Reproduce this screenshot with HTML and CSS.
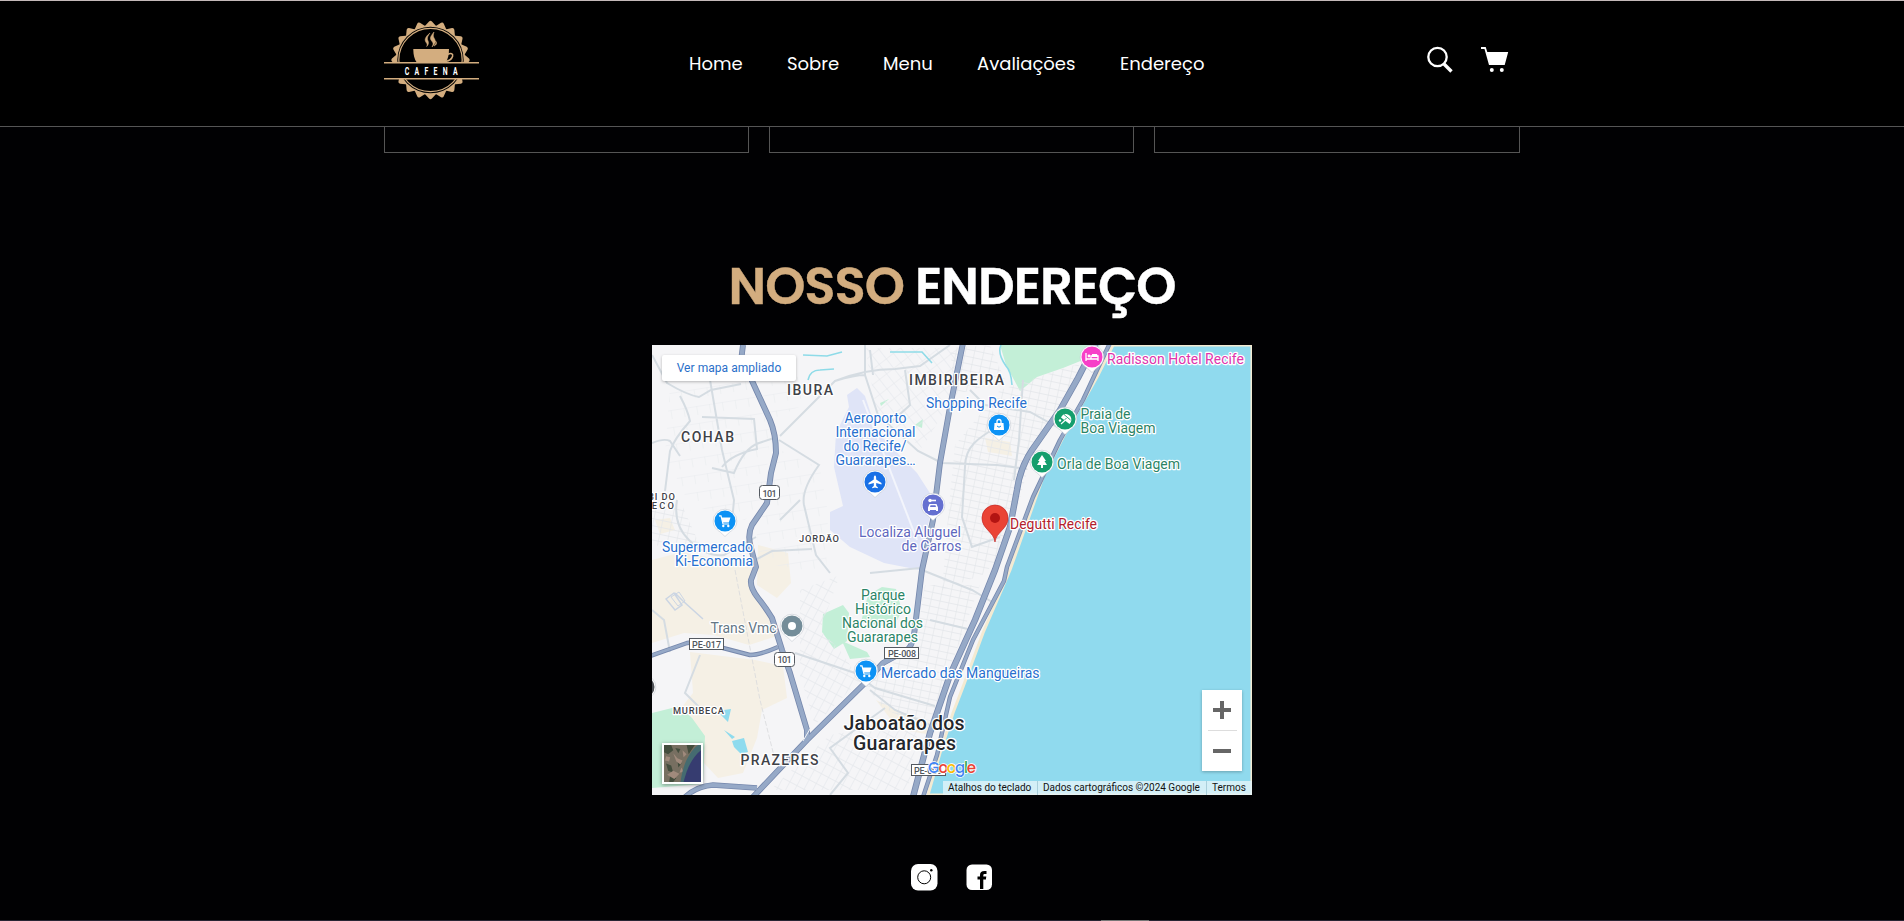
FILE: index.html
```html
<!DOCTYPE html>
<html lang="pt-BR">
<head>
<meta charset="utf-8">
<title>Cafena</title>
<link rel="stylesheet" href="styles.css">
</head>
<body>
<header class="header">
  <div class="container header-inner">
    <svg class="logo" viewBox="384 18 96 84" id="logo">
      <path id="scallop" fill="#d3ad7f"/>
      <circle cx="430.5" cy="60" r="33.2" fill="#000"/>
      <circle cx="430.5" cy="60" r="31.700" fill="none" stroke="#d3ad7f" stroke-width="1.2"/>
      <path d="M413.300 49h35.700c0 6-1 10-3.500 14h-28.500c-2.700-4-3.700-8-3.700-14z" fill="#d3ad7f"/>
      <path d="M448 54.200c3-1.200 5.300-.5 4.600 2-.7 2.500-3.500 4.500-7 5.300" fill="none" stroke="#d3ad7f" stroke-width="1.500"/>
      <path d="M430 33c-5 4-6 7-3.500 10 .8 1 .8 2 .2 3.500 3-3 1.500-5 .8-7-.5-2 .7-4 2.500-6.500zM434 32c-5 6-4 7-1.500 10 1 1.500.5 3-.5 5 4-4 4-6 2-9-1-2-.8-3.500 0-6zM435.500 41c1 2-.5 3.500-1.500 5 2.500-1 3.500-3 1.500-5z" fill="#d3ad7f" stroke="#d3ad7f" stroke-width=".5"/>
      <rect x="384" y="62" width="95" height="17" fill="#000"/>
      <path d="M384 62.800h95M384 78.800h95" stroke="#d3ad7f" stroke-width="1.600"/>
      <text transform="translate(404.800 75) scale(.6 1)" textLength="88" class="logo-text">CAFENA</text>
    </svg>
    <nav class="nav">
      <a class="home">Home</a><a class="sobre">Sobre</a><a class="menu">Menu</a><a class="aval">Avaliações</a><a class="ender">Endereço</a>
    </nav>
    <div class="tools">
      <svg width="28" height="28" viewBox="0 0 28 28"><circle cx="10.500" cy="11" r="9.200" fill="none" stroke="#fff" stroke-width="2.300"/><path d="M16.500 17.500l8 8" stroke="#fff" stroke-width="3.400"/></svg>
      <svg width="28" height="28" viewBox="0 0 28 28"><path d="M0 .9h4.700l1.600 5h20.900l-3.500 13H8L3.500 3H0z" fill="#fff"/><circle cx="10.800" cy="23.900" r="2" fill="#fff"/><circle cx="20.800" cy="23.900" r="2" fill="#fff"/></svg>
    </div>
  </div>
</header>
<main>
  <section class="container cards"><div class="card"></div><div class="card"></div><div class="card"></div></section>
  <h2 class="title"><span>Nosso</span> Endereço</h2>
  <div class="map">
    <svg class="map-canvas" width="600" height="450" viewBox="652 345 600 450">
      <defs>
        <pattern id="g1" width="9" height="7" patternUnits="userSpaceOnUse" patternTransform="rotate(12)"><path d="M0 0H9M0 0V7" stroke="#e3e6ea" stroke-width="1.300"/></pattern>
        <pattern id="g2" width="8" height="11" patternUnits="userSpaceOnUse" patternTransform="rotate(28)"><path d="M0 0H8M0 0V11" stroke="#e5e8ec" stroke-width="1.300"/></pattern>
        <pattern id="g3" width="13" height="17" patternUnits="userSpaceOnUse" patternTransform="rotate(-9)"><path d="M0 0H13M0 0V9" stroke="#eaecef" stroke-width="1.200"/></pattern>
        <pattern id="g4" width="9" height="12" patternUnits="userSpaceOnUse" patternTransform="rotate(-38)"><path d="M0 0H9M0 0V12" stroke="#e5e8ec" stroke-width="1.200"/></pattern>
        <g id="pin"><path d="M-11.800 0a11.800 11.800 0 1 1 23.600 0c0 5-3 8.500-7 11L0 15.500-4.800 11c-4-2.500-7-6-7-11z" fill="#fff" stroke="#b9bec8" stroke-width=".5"/></g>
        <g id="cart"><path d="M-3.600-3.500H5.500L3.800 1.500H-2.300z" fill="#fff"/><path d="M-6-5.200h2l2 8.200H4" fill="none" stroke="#fff" stroke-width="1.200"/><circle cx="-1.700" cy="5" r="1.200" fill="#fff"/><circle cx="3.300" cy="5" r="1.200" fill="#fff"/></g>
      </defs>
      <path d="M652 345h600v450H652z" fill="#f5f5f7"/>
      <g fill="#f5f0e5">
        <path d="M652 560l30-8 40 8 30 8-1 22 20 22 6 24-28 9-35-10-30-2-32 10zM758 545l30 8 3 30-14 15-20-13zM690 652l65 8 28 6 4 32-25 12-5 28-14 35-25 5-30-32-25-15 30-38zM985 438l25 4 2 14-24-4zM655 520l15-2 5 12-15 4zM876 700l25 12 30 10-5 12-28-5z"/>
      </g>
      <path d="M652 713l28-7 12 12 13 18-2 48-51 4zM1000 345l6 20 14 26 17-14 26-9 20-8 18-15zM823 614l20-9 6 8-2 28-13 8-12-17zM868 595l14-8 14 2 6 22-9 17-32-6zM842 641l25 11 3 5-20 2zM880 403l9-4-8 7zM915 425l8-6-1 9z" fill="#c3efd7"/>
      <path d="M857 388l8 8 12 36 40 41 18 28-9 30-6 39-36-7-34-16-20-17v-18l13-6-9-39 2-34 13-26-2-12z" fill="#dfe4f7"/>
      <g>
        <path d="M1000 390l44-15 36-12-18 50-30 42-28 100-22 20-40 15 7-85 6-60z" fill="url(#g1)"/>
        <path d="M925 585h55l-27 75-25 70-45-22-18-23 50-40z" fill="url(#g1)"/>
        <path d="M670 385l75-10 25 55-5 70-20 20-55-15-25-50z" fill="url(#g3)"/>
        <path d="M865 348h95l-10 55-28 45-45-35z" fill="url(#g4)"/>
        <path d="M780 450l40 18 8 45-2 60-65-10-5-35zM760 385l45-10 10 25-45 20z" fill="url(#g3)"/>
        <path d="M800 590l40-15-20 55 20 20 20 30-45 45-15-50zM830 735l90-15-12 70H770z" fill="url(#g2)"/>
        <path d="M652 500l30 5 20 45-50-5zM950 348l40-3 15 35-50 15z" fill="url(#g1)"/>
      </g>
      <g fill="none" stroke="#d5dce2" stroke-width="2">
        <path d="M652 355l15 28q20 12 32 14l12-7 30-6M710 380l12 70 12 50-2 22M680 396q8 15 10 25-16 18-20 30l-5 40M702 417l52 2 3 30q-25 5-35 18M712 468l22 5q10-25 25-30l18-6M779 440l40 25q-18 25-15 40l12 50 14 18M780 436l55-55q20-6 30-6v-30M865 375l13 40 40 36 24 12M835 381q30-12 60-12l25-3 30-21M652 443q12-5 18-2l10 15M677 500q-4 25 12 40 16 17 35 15l32-18M757 559l15-8 40-2M870 573l50-5M942 463l55 2 30 4M970 390l15 15 45 7 45 25M1023 380l-4 60-5 40M1000 425c-20 12-35 20-35 42l-3 50 10 30 28-10"/>
        <path d="M795 653l60 20 20 15 60 18M870 690l25 20 35 15M922 570l50 20 25 15M930 620l42 10M652 610l12 10 6 32M700 655l-15 38 15 15M830 795l18-22-18-25 55-40M905 370l5 35-22 20M800 500l-20 20M870 350l3 25"/>
      </g>
      <path d="M675 593l8 8 20 18M666 599l8-6 8 12-7 5z" fill="none" stroke="#cbd5e3" stroke-width="1.500"/>
      <path d="M671 597l8-5 6 9-7 5z" fill="none" stroke="#cbd5e3"/>
      <path d="M863 400l54 140" stroke="#f3f5fc" stroke-width="2"/>
      <path d="M735 570l25 130 15 60" stroke="#d8d9dc" fill="none" stroke-width=".8" stroke-dasharray="5 2"/>
      <path d="M803 355l24 1 15-4M808 380q2-10 12-10l14-1M890 352h32l10 11M1001 345q-4 8 5 21 5 5 6 19" fill="none" stroke="#8edbe8" stroke-width="1.600"/>
      <path d="M717 711l14-2-3 13zM724 730l11 7-3 2zM732 741l12-3 4 14-7 2-7-7z" fill="#8edbee"/>
      <path d="M1113 345l-16 32-34 60-20 40-33 93-27 63-20 54-10 26-13 40-12 42h324V345z" fill="#90daee" stroke="#f3ead2" stroke-width="3"/>
      <g id="roads" fill="none" stroke-linejoin="round"></g>
      <path d="M803 741l7-12 7-5" fill="none" stroke="#f5f5f7" stroke-width="1"/>
      <g class="shield">
        <rect x="759.500" y="485.500" width="20" height="14" rx="3"/><text x="762.500" y="496.500" textLength="14">101</text>
        <rect x="774.500" y="652.500" width="20" height="14" rx="3"/><text x="777.500" y="663" textLength="14">101</text>
        <rect x="689.500" y="638.500" width="34" height="11"/><text x="692" y="647.500" textLength="29">PE-017</text>
        <rect x="884.500" y="647.500" width="34" height="11"/><text x="888" y="656.500" textLength="28">PE-008</text>
        <rect x="911.500" y="764.500" width="34" height="11"/><text x="914" y="773.500" textLength="28">PE-009</text>
      </g>
      <g id="pins">
        <g transform="translate(1092 357)"><use href="#pin"/><circle r="10.500" fill="#f73fc8"/><path d="M-6-4v8M-6 2H6V4M6 2v-3H-1v3" fill="none" stroke="#fff" stroke-width="1.300"/><path d="M0-3h5l1 3H0z" fill="#fff"/><circle cx="-3" cy="-1" r="1.400" fill="#fff"/></g>
        <g transform="translate(1065 419)"><use href="#pin"/><circle r="10.500" fill="#159e6d"/><path d="M-4-1.500C-2-6 3-6 5.500-2.500 7 0 6.500 3 4.500 5z" fill="#fff"/><path d="M-1-4.500L5.500 1M1.500-1l-6 6" stroke="#159e6d" stroke-width=".9"/><path d="M.5 1l-4.500 4" stroke="#fff" stroke-width="1.200"/><circle cx="-5" cy="1.500" r="1.200" fill="#fff"/></g>
        <g transform="translate(1042 462)"><use href="#pin"/><circle r="10.500" fill="#159e6d"/><path d="M0-7l4 6H2.500L5 3H1v3h-2V3h-4l2.500-4H-4z" fill="#fff"/></g>
        <g transform="translate(999 425)"><use href="#pin"/><circle r="10.500" fill="#0c92f5"/><path d="M-4.500-2h9L5 5H-5z" fill="#fff"/><path d="M-2-2v-1.500a2 2 0 0 1 4 0V-2" fill="none" stroke="#fff" stroke-width="1.300"/><path d="M-2 1q2 2.500 4 0" fill="none" stroke="#0c92f5"/></g>
        <g transform="translate(875 482)"><use href="#pin"/><circle r="10.500" fill="#1970e6"/><path d="M0-6.500c1 0 1.200 1 1.200 4L6.500 1v1.400L1.200 1v3l1.600 1.300v1L0 5.600l-2.800.7v-1L-1.200 4V1l-5.300 1.400V1l5.300-3.500c0-3 .2-4 1.200-4z" fill="#fff"/></g>
        <g transform="translate(933 505)"><use href="#pin"/><circle r="10.500" fill="#6570d0"/><path d="M-5 6V2.500l1.500-3.500h7L5 2.500V6H3V5h-6v1z" fill="#fff"/><path d="M-3-4.500h6" stroke="#fff" stroke-width="1.600"/><circle cx="-3" cy="-4.500" r="1.700" fill="#fff"/><path d="M-3 2L-2.500.3h5L3 2z" fill="#6570d0"/></g>
        <g transform="translate(725 521)"><use href="#pin"/><circle r="10.500" fill="#0c92f5"/><use href="#cart"/></g>
        <g transform="translate(866 671)"><use href="#pin"/><circle r="10.500" fill="#0c92f5"/><use href="#cart"/></g>
        <g transform="translate(792 626)"><use href="#pin"/><circle r="10.500" fill="#748d99"/><circle r="4" fill="#fff"/></g>
        <g transform="translate(644 687)"><use href="#pin"/><circle r="10.500" fill="#4c4f54"/></g>
        <path d="M995 542c-1-10-13-13-13-24a13 13 0 0 1 26 0c0 11-12 14-13 24z" fill="#ea4335" stroke="#c5221f" stroke-width=".7"/><circle cx="995" cy="518" r="5" fill="#b31412"/>
      </g>
      <g class="area">
        <text x="787" y="395" textLength="46">IBURA</text><text x="681" y="442" textLength="53">COHAB</text><text x="909" y="385" textLength="95">IMBIRIBEIRA</text><text x="740.500" y="765" textLength="78">PRAZERES</text>
        <g class="tiny"><text x="799" y="542" textLength="40">JORDÃO</text><text x="673" y="714" textLength="51">MURIBECA</text><text x="648" y="500" textLength="27">BI DO</text><text x="643" y="509" textLength="31">NECO</text></g>
      </g>
      <g class="city"><text x="843.500" y="729.500" textLength="121">Jaboatão dos</text><text x="853" y="749.500" textLength="103">Guararapes</text></g>
      <g class="place blue">
        <text x="926" y="408" textLength="101">Shopping Recife</text>
        <text x="844.500" y="423" textLength="62">Aeroporto</text><text x="835.500" y="437" textLength="80">Internacional</text><text x="843.500" y="451" textLength="63">do Recife/</text><text x="835.500" y="465" textLength="80">Guararapes…</text>
        <text x="662" y="552" textLength="91">Supermercado</text><text x="675" y="566" textLength="78">Ki-Economia</text>
        <text x="881" y="678" textLength="158.500">Mercado das Mangueiras</text>
      </g>
      <g class="place violet"><text x="859" y="537" textLength="102">Localiza Aluguel</text><text x="901.500" y="551" textLength="60">de Carros</text></g>
      <g class="place green">
        <text x="1080.500" y="419" textLength="50">Praia de</text><text x="1080.500" y="433" textLength="75">Boa Viagem</text><text x="1057" y="469" textLength="123">Orla de Boa Viagem</text>
        <text x="861" y="600" textLength="44">Parque</text><text x="855" y="614" textLength="56">Histórico</text><text x="842" y="628" textLength="81">Nacional dos</text><text x="847" y="642" textLength="71">Guararapes</text>
      </g>
      <text class="place pink" x="1107" y="364" textLength="137">Radisson Hotel Recife</text>
      <text class="place red" x="1010" y="529" textLength="87">Degutti Recife</text>
      <text class="place gray" x="710.500" y="633" textLength="66">Trans Vmc</text>
      <text class="google" x="928" y="773" textLength="48"><tspan fill="#4285f4">G</tspan><tspan fill="#ea4335">o</tspan><tspan fill="#fbbc04">o</tspan><tspan fill="#4285f4">g</tspan><tspan fill="#34a853">l</tspan><tspan fill="#ea4335">e</tspan></text>
    </svg>
    <a class="enlarge">Ver mapa ampliado</a>
    <svg class="thumb" viewBox="0 0 36 36"><path d="M0 0h36v36H0z" fill="#776f61"/><path d="M0 0h7l2 5-5 4-4-2zM22 0h8l-6 9zM2 18l5 2 2 7-5-2zM13 14l4 4-3 4zM6 30l6 2-3 4H5zM11 3l5 1-2 4z" fill="#434d3d"/><path d="M9 8l4 5 5 2-2 4-4-3zM3 29l6-4 6 3-5 5zM18 5l4 4-3 3zM2 11l4 1-1 4-4-1zM17 22l2 4-4 1z" fill="#a08a7c"/><path d="M36 0v36H16c2-12 5-26 17-36z" fill="#456b70"/><path d="M36 5v31H19c3-11 7-23 17-31z" fill="#363c70"/></svg>
    <div class="zoom"><span class="plus"></span><span class="minus"></span></div>
    <div class="credits"><span class="c1">Atalhos do teclado</span><span class="c2">Dados cartográficos ©2024 Google</span><span class="c3">Termos</span></div>
  </div>
</main>
<footer class="footer">
  <svg width="27" height="27" viewBox="0 0 27 27"><rect width="26.500" height="26.500" rx="7" fill="#fff"/><circle cx="13.200" cy="13.300" r="6.500" fill="none" stroke="#000" stroke-width="1"/><circle cx="20.300" cy="6.300" r="1.200"/></svg>
  <svg width="27" height="27" viewBox="0 0 27 27"><rect x=".5" y=".5" width="25.500" height="25.500" rx="5.500" fill="#fff"/><path d="M14 25v-9.500h-2.500v-3H14v-1.500c0-3.500 2-4.500 6.500-4v3c-2.500-.2-3.200 0-3.200 1.500v1h3l-.4 3h-2.600V25z"/></svg>
</footer>
<div class="bottom-line"><i></i></div>
<script src="map.js"></script>
</body>
</html>
```
FILE: styles.css
```css
* { box-sizing: border-box; }
body { margin: 0; height: 921px; overflow: hidden; background: #010103; color: #fff; font-family: Poppins, Inter, sans-serif; position: relative; }
.container { width: 1136px; margin: 0 auto; }
.header { height: 127px; background: #000; border-top: 1px solid #c4b9b9; border-bottom: 1px solid #555; }
.header-inner { display: flex; height: 125px; align-items: flex-start; }
.logo { width: 96px; height: 84px; margin-top: 17px; }
.logo-text { font: 700 11.5px Roboto, sans-serif; fill: #fff; }
.nav { display: flex; gap: 44px; margin: 50px 0 0 209px; font-size: 18px; line-height: 26px; }
.nav a { white-space: nowrap; }
.home { width: 54px; }
.sobre { width: 52px; }
.menu { width: 50px; }
.aval { width: 99px; }
.ender { width: 84px; }
.tools { display: flex; gap: 26px; margin: 45px 11px 0 auto; }
.cards { display: grid; grid-template-columns: 365px 365px 366px; gap: 20px; }
.card { height: 26px; border: 1px solid #555; border-top: 0; }
.title { margin: 99px 0 0; height: 93px; line-height: 68px; text-align: center; font-size: 51.2px; font-weight: 600; text-transform: uppercase; white-space: nowrap; letter-spacing: -1px; -webkit-text-stroke: .4px; }
.title span { color: #d3ad7f; }
.map { position: relative; width: 600px; height: 450px; margin: 0 auto; font-family: Roboto, sans-serif; overflow: hidden; }
.map-canvas { display: block; }
.map-canvas text { paint-order: stroke; stroke: #fff; stroke-width: 2.5px; stroke-linejoin: round; }
.place { font-size: 14px; }
.blue { fill: #2870cf; }
.violet { fill: #5e67be; }
.green { fill: #2b8466; }
.pink { fill: #dd35ad; }
.red { fill: #b3202c; }
.gray { fill: #647786; }
.area { font-size: 14px; font-weight: 500; fill: #3f4248; }
.tiny { font-size: 9.3px; }
.city { font-size: 19.5px; font-weight: 500; fill: #24272c; }
.shield rect { fill: #fff; stroke: #555a61; }
.map-canvas .shield text { font-size: 9px; font-weight: 500; fill: #50555c; stroke: none; }
.map-canvas .google { font: 500 15px Poppins, sans-serif; stroke-width: 1.5px; }
.enlarge { position: absolute; left: 10px; top: 10px; width: 134px; height: 26px; background: #fff; color: #2a6fc9; font-size: 12px; line-height: 26px; text-align: center; letter-spacing: .05px; box-shadow: 0 1px 3px #0004; border-radius: 2px; }
.thumb { position: absolute; left: 10px; top: 398px; width: 41px; height: 41px; border: 2px solid #fff; box-shadow: 0 1px 4px #0006; }
.zoom { position: absolute; left: 550px; top: 345px; width: 40px; height: 81px; background: #fff; box-shadow: 0 1px 3px #0004; display: flex; flex-direction: column; }
.zoom span { height: 41px; display: block; background: linear-gradient(#666, #666) center / 18px 4px no-repeat; }
.zoom .plus { background: linear-gradient(#666, #666) center / 18px 4px no-repeat, linear-gradient(#666, #666) center / 4px 18px no-repeat, linear-gradient(#ddd, #ddd) bottom / 29px 1px no-repeat; }
.credits { position: absolute; right: 0; bottom: 0; height: 14px; display: flex; font-size: 10px; line-height: 14px; color: #111; }
.credits span { background: #e4f4f9cc; padding-left: 5px; white-space: nowrap; }
.c1 { width: 94px; }
.credits .c2, .credits .c3 { border-left: 1px solid #a9cfdb; }
.c2 { width: 169px; }
.c3 { width: 46px; }
.footer { display: flex; justify-content: center; gap: 28px; margin-top: 69px; }
.bottom-line { position: absolute; left: 0; bottom: 0; width: 100%; height: 1px; background: #282433; }
.bottom-line i { display: block; width: 48px; height: 1px; margin-left: 1101px; background: #777; }
```
FILE: map.js
```javascript
const NS = 'http://www.w3.org/2000/svg';

// Main roads are drawn twice: a dark casing below a lighter centre.
const roads = [
  ['M743 345L741.5 357 753 383 770 420Q776 434 776 453L771 473 767 503 752 525Q747 535 751 548L756 567 751 580Q750 588 758 598T772 618L782 650 790 673 807 730V741', 5.5],
  ['M753 797L807 740 863 685 883 663 907 650Q913 646 915 627L922 570 933 520 940 463 950 407 963 343', 5.5],
  ['M650 656L687 643Q705 640 723 648L750 655Q760 655 778 647', 4],
  ['M685 797Q697 786 713 785L757 788', 5],
  ['M1096 343L1078 378 1060 410 1032 450Q1020 468 1017 490L1010 527 995 570 975 620 950 675 930 733 913 797', 6],
  ['M1110 343L1097 370 1083 400 1060 440 1033 497 1007 567 1004 581 973 640 950 697 937 755 923 797', 4]
];
const layer = document.getElementById('roads');
for (const pass of [0, 1]) {
  for (const [d, width] of roads) {
    const p = document.createElementNS(NS, 'path');
    p.setAttribute('d', d);
    p.setAttribute('stroke', pass ? '#96a9c7' : '#7587ac');
    p.setAttribute('stroke-width', pass ? width - 1.2 : width + 0.4);
    layer.appendChild(p);
  }
}

// Toothed rim of the logo seal.
let rim = '';
const teeth = 20;
for (let i = 0; i < teeth; i++) {
  const at = (k, r) => {
    const a = (i + k) * 2 * Math.PI / teeth - Math.PI / 2;
    return (430.5 + r * Math.cos(a)).toFixed(2) + ' ' + (60 + r * Math.sin(a)).toFixed(2);
  };
  rim += (i ? 'L' : 'M') + at(-0.47, 34.8) + 'L' + at(-0.12, 38.6) + 'Q' + at(0, 40) + ' ' + at(0.12, 38.6) + 'L' + at(0.47, 34.8);
}
document.getElementById('scallop').setAttribute('d', rim + 'Z');
```
